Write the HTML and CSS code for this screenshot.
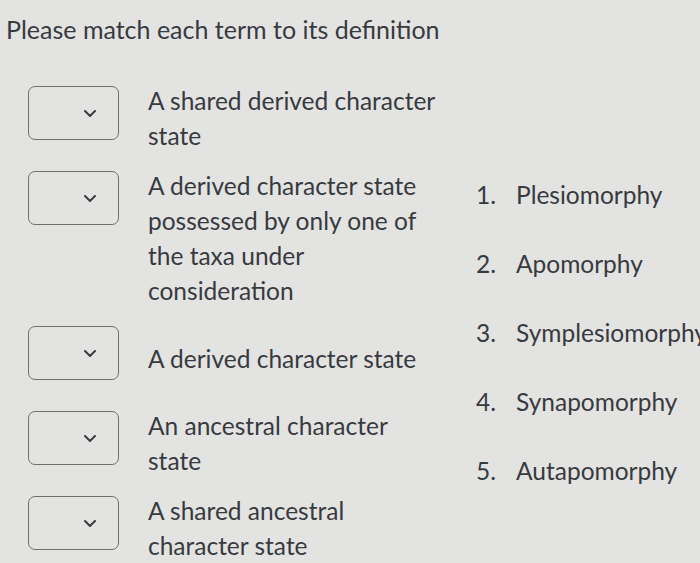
FILE: index.html
```html
<!DOCTYPE html>
<html>
<head>
<meta charset="utf-8">
<link rel="stylesheet" href="styles.css">
</head>
<body>
<div class="page">
  <h1 class="title">Please match each term to its definition</h1>
  <div class="content">
    <div class="pairs">
      <div class="pair">
        <div class="select"><svg class="chev" viewBox="0 0 12 7" width="12" height="7"><path d="M1 1l5 5 5-5" fill="none" stroke="#3a3d42" stroke-width="2" stroke-linecap="round" stroke-linejoin="round"/></svg></div>
        <div class="def">A shared derived character state</div>
      </div>
      <div class="pair">
        <div class="select"><svg class="chev" viewBox="0 0 12 7" width="12" height="7"><path d="M1 1l5 5 5-5" fill="none" stroke="#3a3d42" stroke-width="2" stroke-linecap="round" stroke-linejoin="round"/></svg></div>
        <div class="def">A derived character state possessed by only one of the taxa under consideration</div>
      </div>
      <div class="pair">
        <div class="select"><svg class="chev" viewBox="0 0 12 7" width="12" height="7"><path d="M1 1l5 5 5-5" fill="none" stroke="#3a3d42" stroke-width="2" stroke-linecap="round" stroke-linejoin="round"/></svg></div>
        <div class="def">A derived character state</div>
      </div>
      <div class="pair">
        <div class="select"><svg class="chev" viewBox="0 0 12 7" width="12" height="7"><path d="M1 1l5 5 5-5" fill="none" stroke="#3a3d42" stroke-width="2" stroke-linecap="round" stroke-linejoin="round"/></svg></div>
        <div class="def">An ancestral character state</div>
      </div>
      <div class="pair">
        <div class="select"><svg class="chev" viewBox="0 0 12 7" width="12" height="7"><path d="M1 1l5 5 5-5" fill="none" stroke="#3a3d42" stroke-width="2" stroke-linecap="round" stroke-linejoin="round"/></svg></div>
        <div class="def">A shared ancestral character state</div>
      </div>
    </div>
    <ol class="terms">
      <li class="term"><span class="num">1.</span><span>Plesiomorphy</span></li>
      <li class="term"><span class="num">2.</span><span>Apomorphy</span></li>
      <li class="term"><span class="num">3.</span><span>Symplesiomorphy</span></li>
      <li class="term"><span class="num">4.</span><span>Synapomorphy</span></li>
      <li class="term"><span class="num">5.</span><span>Autapomorphy</span></li>
    </ol>
  </div>
</div>
</body>
</html>
```

FILE: styles.css
```css
html, body {
  margin: 0;
  padding: 0;
}
body {
  background: #e3e3e1;
  color: #373a3f;
  font-family: Lato, "Open Sans", sans-serif;
  width: 700px;
  height: 563px;
  overflow: hidden;
}
.page {
  padding: 11px 0 0 6px;
}
.title {
  margin: 0;
  font-size: 25px;
  font-weight: 400;
  line-height: 36px;
}
.content {
  display: flex;
  margin-top: 36px;
}
.pairs {
  display: flex;
  flex-direction: column;
  gap: 15px;
  padding-left: 22px;
  width: 448px;
  flex-shrink: 0;
}
.pair {
  display: flex;
  align-items: flex-start;
}
.select {
  box-sizing: border-box;
  width: 91px;
  height: 54px;
  margin-top: 3px;
  border: 1.5px solid #707070;
  border-radius: 7px;
  display: flex;
  align-items: center;
  justify-content: flex-end;
  padding-right: 22px;
  flex-shrink: 0;
}
.chev {
  display: block;
}
.def {
  margin-left: 29px;
  width: 292px;
  min-height: 70px;
  display: flex;
  align-items: center;
  font-size: 24.5px;
  line-height: 35px;
}
.terms {
  list-style: none;
  margin: 95px 0 0 0;
  padding: 0;
  display: flex;
  flex-direction: column;
  gap: 35px;
  white-space: nowrap;
}
.term {
  display: flex;
  font-size: 24.5px;
  line-height: 34px;
}
.num {
  width: 40px;
}
```
